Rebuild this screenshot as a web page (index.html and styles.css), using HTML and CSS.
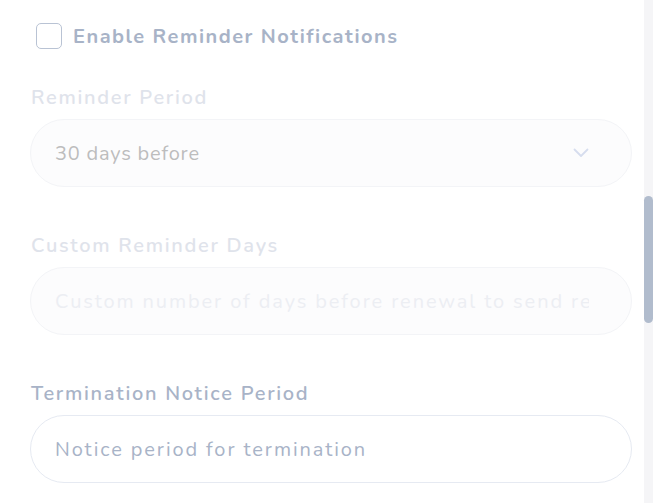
FILE: index.html
```html
<!DOCTYPE html>
<html>
<head>
  <meta charset="utf-8">
  <meta name="viewport" content="width=device-width">
  <title>Reminder Settings</title>
  <link rel="stylesheet" href="styles.css">
</head>
<body>
  <div class="page">
    <div class="form">
      <label class="check-row">
        <span class="checkbox"></span>
        <span class="check-label">Enable Reminder Notifications</span>
      </label>

      <div class="field disabled">
        <div class="field-label">Reminder Period</div>
        <div class="select">
          <span class="value">30 days before</span>
          <svg class="chevron" width="16" height="10" viewBox="0 0 16 10">
            <path d="M1.5 1.5 L8 8 L14.5 1.5" fill="none" stroke="currentColor" stroke-width="1.8" stroke-linecap="round" stroke-linejoin="round"/>
          </svg>
        </div>
      </div>

      <div class="field disabled">
        <div class="field-label">Custom Reminder Days</div>
        <div class="input">
          <span class="placeholder">Custom number of days before renewal to send reminder</span>
        </div>
      </div>

      <div class="field">
        <div class="field-label">Termination Notice Period</div>
        <div class="input">
          <span class="placeholder">Notice period for termination</span>
        </div>
      </div>
    </div>

    <div class="scroll-track">
      <div class="scroll-thumb"></div>
    </div>
    <div class="edge"></div>
  </div>
</body>
</html>
```

FILE: styles.css
```css
body {
  margin: 0;
  padding: 0;
  background: #fff;
  font-family: "Nunito", "Open Sans", sans-serif;
  height: 503px;
  overflow: hidden;
}

.page {
  display: flex;
  height: 503px;
}

.form {
  flex: 1;
  padding: 23px 12px 0 30px;
  min-width: 0;
}

.check-row {
  display: flex;
  align-items: center;
  gap: 11px;
  margin-left: 6px;
  height: 26px;
}

.checkbox {
  width: 24px;
  height: 24px;
  border: 1.5px solid #b9c3d4;
  border-radius: 5px;
  flex: none;
}

.check-label {
  font-size: 20px;
  font-weight: 700;
  letter-spacing: 1.5px;
  color: #a8b3c7;
}

.field {
  margin-top: 37px;
}

.field + .field {
  margin-top: 47px;
}

.field-label {
  font-size: 20px;
  font-weight: 600;
  letter-spacing: 1.7px;
  line-height: 24px;
  color: #a8b3c7;
  margin-left: 1px;
}

.select,
.input {
  margin-top: 9px;
  height: 68px;
  box-sizing: border-box;
  border: 1px solid #e6eaf2;
  border-radius: 34px;
  padding: 0 42px 0 24px;
  display: flex;
  align-items: center;
  justify-content: space-between;
  font-size: 20px;
  white-space: nowrap;
  overflow: hidden;
}

.value {
  letter-spacing: 0.8px;
}

.placeholder {
  color: #a8b3c7;
  letter-spacing: 1.9px;
  overflow: hidden;
}

.disabled .field-label {
  color: #dfe3eb;
}

.disabled .select,
.disabled .input {
  background: #fcfcfd;
  border-color: #f3f4f7;
}

.disabled .select {
  color: #bdbdbd;
}

.disabled .placeholder {
  color: #eceef3;
}

.chevron {
  color: #d6ddee;
  flex: none;
}

.scroll-track {
  width: 9px;
  background: #f5f5f7;
  flex: none;
}

.scroll-thumb {
  margin-top: 196px;
  height: 127px;
  border-radius: 5px;
  background: #b1bccd;
}

.edge {
  width: 17px;
  flex: none;
}
```
